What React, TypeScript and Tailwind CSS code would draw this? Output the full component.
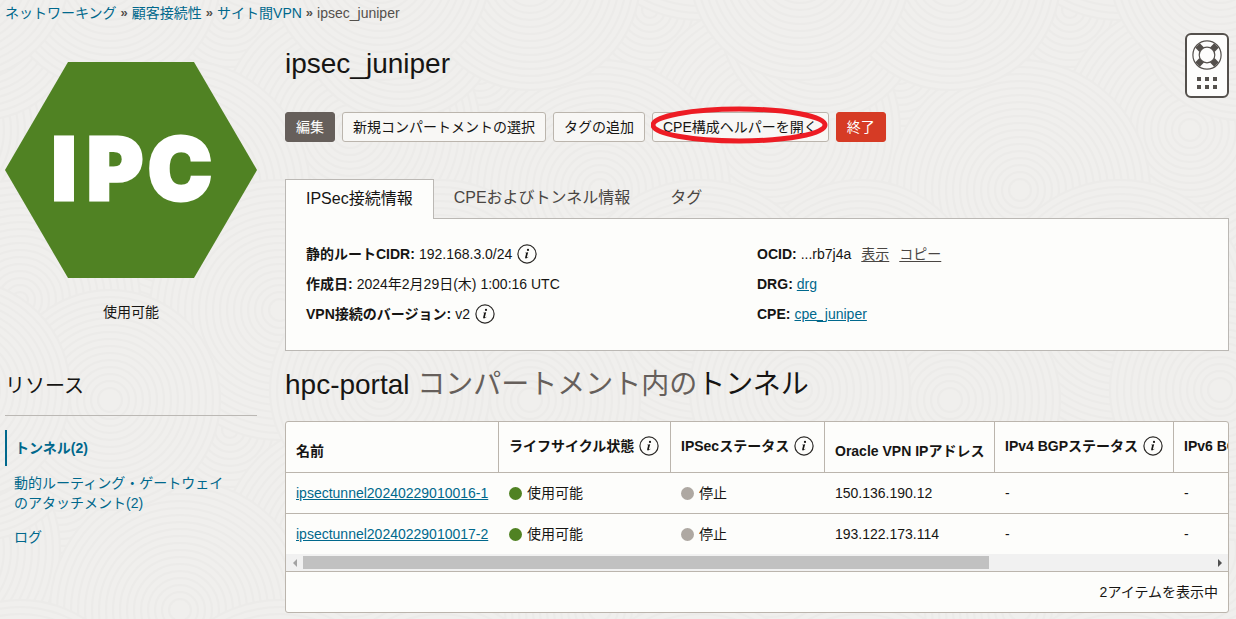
import type { ReactNode } from "react";

const link = "text-[#00688c]";

const RIPPLE_CENTERS: [number, number, number][] = [
  [60, 70, 140], [230, 10, 120], [350, 130, 130], [180, 190, 130], [20, 300, 120],
  [280, 310, 130], [400, 20, 100], [110, 400, 110], [380, 390, 110],
];

function Ripples() {
  const tile = 420;
  return (
    <svg className="absolute inset-0 -z-10 h-full w-full" aria-hidden="true">
      <defs>
        <pattern id="ripples" width={tile} height={tile} patternUnits="userSpaceOnUse">
          <rect width={tile} height={tile} fill="#f0efed" />
          {RIPPLE_CENTERS.map(([cx, cy, r]) =>
            [-tile, 0, tile].flatMap((dx) =>
              [-tile, 0, tile].map((dy) => (
                <g key={`${cx}-${cy}-${dx}-${dy}`} stroke="#ecebe9" strokeWidth="2" fill="none">
                  <circle cx={cx + dx} cy={cy + dy} r={r} fill="#f0efed" />
                  {Array.from({ length: Math.floor(r / 7) - 1 }, (_, i) => (
                    <circle key={i} cx={cx + dx} cy={cy + dy} r={r - (i + 1) * 7} />
                  ))}
                </g>
              )),
            ),
          )}
        </pattern>
      </defs>
      <rect width="100%" height="100%" fill="url(#ripples)" />
    </svg>
  );
}

function Info({ label }: { label: string }) {
  return (
    <button type="button" aria-label={label} className="ml-[5px] inline-flex shrink-0 align-middle">
      <svg width="20" height="20" viewBox="0 0 20 20" fill="none">
        <circle cx="10" cy="10" r="9.1" stroke="#2b2927" strokeWidth="1.2" />
        <circle cx="11" cy="5.9" r="1.1" fill="#161513" />
        <path d="M8.2 8.7 11.2 8.2 9.9 13Q9.8 13.6 11.4 12.7L11.5 13.1Q9.9 14.6 8.8 14.5 7.9 14.3 8.2 13.1L9.1 9.6Q9.1 9.1 8.1 9.1Z" fill="#161513" />
      </svg>
    </button>
  );
}

function Action({ children, className = "border-[#bbb5ad] bg-[#f8f7f5] text-[#161513]" }: { children: ReactNode; className?: string }) {
  return (
    <button type="button" className={`h-[30px] rounded-[3px] border px-[10px] whitespace-nowrap ${className}`}>
      {children}
    </button>
  );
}

function HelpWidget() {
  return (
    <button type="button" aria-label="ヘルプ" className="absolute top-[33px] right-[7px] flex h-[65px] w-11 flex-col items-center rounded-md border-2 border-[#54504c] bg-[#fdfdfc] pt-[5px]">
      <svg width="30" height="30" viewBox="0 0 30 30" fill="none" stroke="#54504c">
        <path d="M5.6 5.6 9.7 9.7M20.3 20.3l4.1 4.1M24.4 5.6 20.3 9.7M9.7 20.3l-4.1 4.1" strokeWidth="6.4" />
        <circle cx="15" cy="15" r="14.1" strokeWidth="1.2" />
        <circle cx="15" cy="15" r="7.8" fill="#fdfdfc" strokeWidth="1.2" />
      </svg>
      <span className="mt-[7px] grid grid-cols-3 gap-1">
        {[0, 1, 2, 3, 4, 5].map((n) => (
          <span key={n} className="h-1 w-1 bg-[#54504c]" />
        ))}
      </span>
    </button>
  );
}

function Detail({ term, children }: { term: string; children: ReactNode }) {
  return (
    <div className="flex h-[30px] items-center">
      <dt className="mr-1 font-bold">{term}:</dt>
      <dd className="flex items-center">{children}</dd>
    </div>
  );
}

const columns = [
  { name: "名前", width: "w-[213px]" },
  { name: "ライフサイクル状態", width: "w-[172px]", info: true },
  { name: "IPSecステータス", width: "w-[154px]", info: true },
  { name: "Oracle VPN IPアドレス", width: "w-[170px]" },
  { name: "IPv4 BGPステータス", width: "w-[179px]", info: true },
  { name: "IPv6 BGPステータス", width: "w-[360px]", info: true },
];

const tunnels = [
  { name: "ipsectunnel20240229010016-1", ip: "150.136.190.12" },
  { name: "ipsectunnel20240229010017-2", ip: "193.122.173.114" },
];

function State({ color, children }: { color: string; children: ReactNode }) {
  return (
    <span className="flex items-center gap-[5px]">
      <span className={`h-[13px] w-[13px] rounded-full ${color}`} />
      {children}
    </span>
  );
}

function TunnelTable() {
  return (
    <section className="mt-[18px] rounded-[3px] border border-[#bbb5ad] bg-[#fdfdfb]">
      <div className="overflow-hidden">
        <table className="w-[1248px] table-fixed border-separate border-spacing-0 text-left">
          <thead>
            <tr>
              {columns.map((c, i) => (
                <th
                  key={c.name}
                  scope="col"
                  className={`${c.width} h-[51px] border-b border-[#bbb5ad] px-[10px] py-0 font-bold whitespace-nowrap ${i < columns.length - 1 ? "border-r" : ""}`}
                >
                  <span className={`flex items-center ${c.info ? "pb-[2px]" : "pt-2"}`}>
                    {c.name}
                    {c.info && <Info label={`${c.name}の情報`} />}
                  </span>
                </th>
              ))}
            </tr>
          </thead>
          <tbody className="[&_td]:h-10 [&_td]:border-[#bbb5ad] [&_td]:px-[10px] [&_td]:py-0 [&_tr:first-child_td]:h-[41px] [&_tr:first-child_td]:border-b">
            {tunnels.map((t) => (
              <tr key={t.name}>
                <td><a href="#" className={`${link} underline`}>{t.name}</a></td>
                <td><State color="bg-[#508223]">使用可能</State></td>
                <td><State color="bg-[#aea8a2]">停止</State></td>
                <td>{t.ip}</td>
                <td>-</td>
                <td>-</td>
              </tr>
            ))}
          </tbody>
        </table>
      </div>
      <div className="flex h-[17px] items-center bg-[#f1f1f1]">
        <button type="button" aria-label="左へスクロール" className="flex w-[17px] justify-center">
          <svg width="4" height="8" viewBox="0 0 4 8"><path d="M4 0v8L0 4z" fill="#a3a3a3" /></svg>
        </button>
        <div className="flex-1"><div className="h-[13px] w-[75.5%] bg-[#c1c1c1]" /></div>
        <button type="button" aria-label="右へスクロール" className="flex w-[17px] justify-center">
          <svg width="4" height="8" viewBox="0 0 4 8"><path d="M0 0v8l4-4z" fill="#505050" /></svg>
        </button>
      </div>
      <p className="border-t border-[#bbb5ad] px-[10px] text-right leading-10">2アイテムを表示中</p>
    </section>
  );
}

function Crumb({ children }: { children: ReactNode }) {
  return (
    <>
      <a href="#" className={link}>{children}</a>
      <span className="mx-1 text-[13px] font-bold text-[#54504c]">»</span>
    </>
  );
}

export default function App() {
  return (
    <div className="relative isolate min-h-screen overflow-hidden pr-[7px] pl-[5px] font-['Liberation_Sans','Noto_Sans_CJK_JP',sans-serif] text-[14px] leading-5 text-[#161513]">
      <Ripples />
      <nav aria-label="パンくず" className="flex h-[26px] items-center">
        <Crumb>ネットワーキング</Crumb>
        <Crumb>顧客接続性</Crumb>
        <Crumb>サイト間VPN</Crumb>
        <span className="text-[#54504c]">ipsec_juniper</span>
      </nav>
      <HelpWidget />
      <div className="flex gap-7">
        <aside className="w-[252px] shrink-0 pt-9">
          <svg viewBox="0 0 252 216" className="w-full" role="img" aria-label="IPC">
            <path d="M0 108 63 0H189L252 108 189 216H63Z" fill="#508223" />
            <text y="138" textAnchor="middle" fontSize="86" strokeWidth="3" className="fill-white stroke-white font-['Inter',sans-serif] font-black">
              <tspan x="59">I</tspan>
              <tspan x="110">P</tspan>
              <tspan x="175">C</tspan>
            </text>
          </svg>
          <p className="mt-6 text-center">使用可能</p>
          <h2 className="mt-[50px] border-b border-[#bbb8b4] pb-[15px] text-[20px] leading-7">リソース</h2>
          <ul className={`mt-[14px] ${link}`}>
            <li className="border-l-2 border-[#00688c] py-2 pl-2 font-bold"><a href="#">トンネル(2)</a></li>
            <li className="mt-[7px] pl-[9px]"><a href="#">動的ルーティング・ゲートウェイ<br />のアタッチメント(2)</a></li>
            <li className="mt-[14px] pl-[9px]"><a href="#">ログ</a></li>
          </ul>
        </aside>
        <main className="min-w-0 flex-1 pt-5">
          <h1 className="text-[28px] leading-9">ipsec_juniper</h1>
          <div className="mt-[30px] flex gap-[7px]">
            <Action className="border-[#665f5b] bg-[#665f5b] text-white">編集</Action>
            <Action>新規コンパートメントの選択</Action>
            <Action>タグの追加</Action>
            <div className="relative">
              <Action>CPE構成ヘルパーを開く</Action>
              <svg className="pointer-events-none absolute -top-[6px] -left-px h-[38px] w-[177px]" viewBox="0 0 177 38" fill="none" aria-hidden="true">
                <ellipse cx="88" cy="19" rx="86" ry="16" stroke="#ed1c24" strokeWidth="5" />
              </svg>
            </div>
            <Action className="border-[#d63b25] bg-[#d63b25] text-white">終了</Action>
          </div>
          <div role="tablist" className="mt-[37px] flex text-[16px]">
            <button role="tab" aria-selected="true" type="button" className="relative -mb-px h-10 border border-b-0 border-[#bbb8b4] bg-[#fdfdfb] px-5 pb-[2px]">IPSec接続情報</button>
            <button role="tab" aria-selected="false" type="button" className="px-5 pb-[2px] text-[#4a4643]">CPEおよびトンネル情報</button>
            <button role="tab" aria-selected="false" type="button" className="px-5 pb-[2px] text-[#4a4643]">タグ</button>
          </div>
          <div role="tabpanel" className="grid grid-cols-2 border border-[#bbb8b4] bg-[#fdfdfb] px-5 pt-5 pb-[21px]">
            <dl>
              <Detail term="静的ルートCIDR">192.168.3.0/24<Info label="静的ルートCIDRの情報" /></Detail>
              <Detail term="作成日">2024年2月29日(木) 1:00:16 UTC</Detail>
              <Detail term="VPN接続のバージョン">v2<Info label="VPN接続のバージョンの情報" /></Detail>
            </dl>
            <dl>
              <Detail term="OCID">
                ...rb7j4a
                <button type="button" className="ml-[10px] text-[#4a4643] underline underline-offset-2">表示</button>
                <button type="button" className="ml-[10px] text-[#4a4643] underline underline-offset-2">コピー</button>
              </Detail>
              <Detail term="DRG"><a href="#" className={`${link} underline`}>drg</a></Detail>
              <Detail term="CPE"><a href="#" className={`${link} underline`}>cpe_juniper</a></Detail>
            </dl>
          </div>
          <h2 className="mt-4 text-[28px] leading-9">
            hpc-portal <span className="text-[#665f5b]">コンパートメント内の</span>トンネル
          </h2>
          <TunnelTable />
        </main>
      </div>
    </div>
  );
}
